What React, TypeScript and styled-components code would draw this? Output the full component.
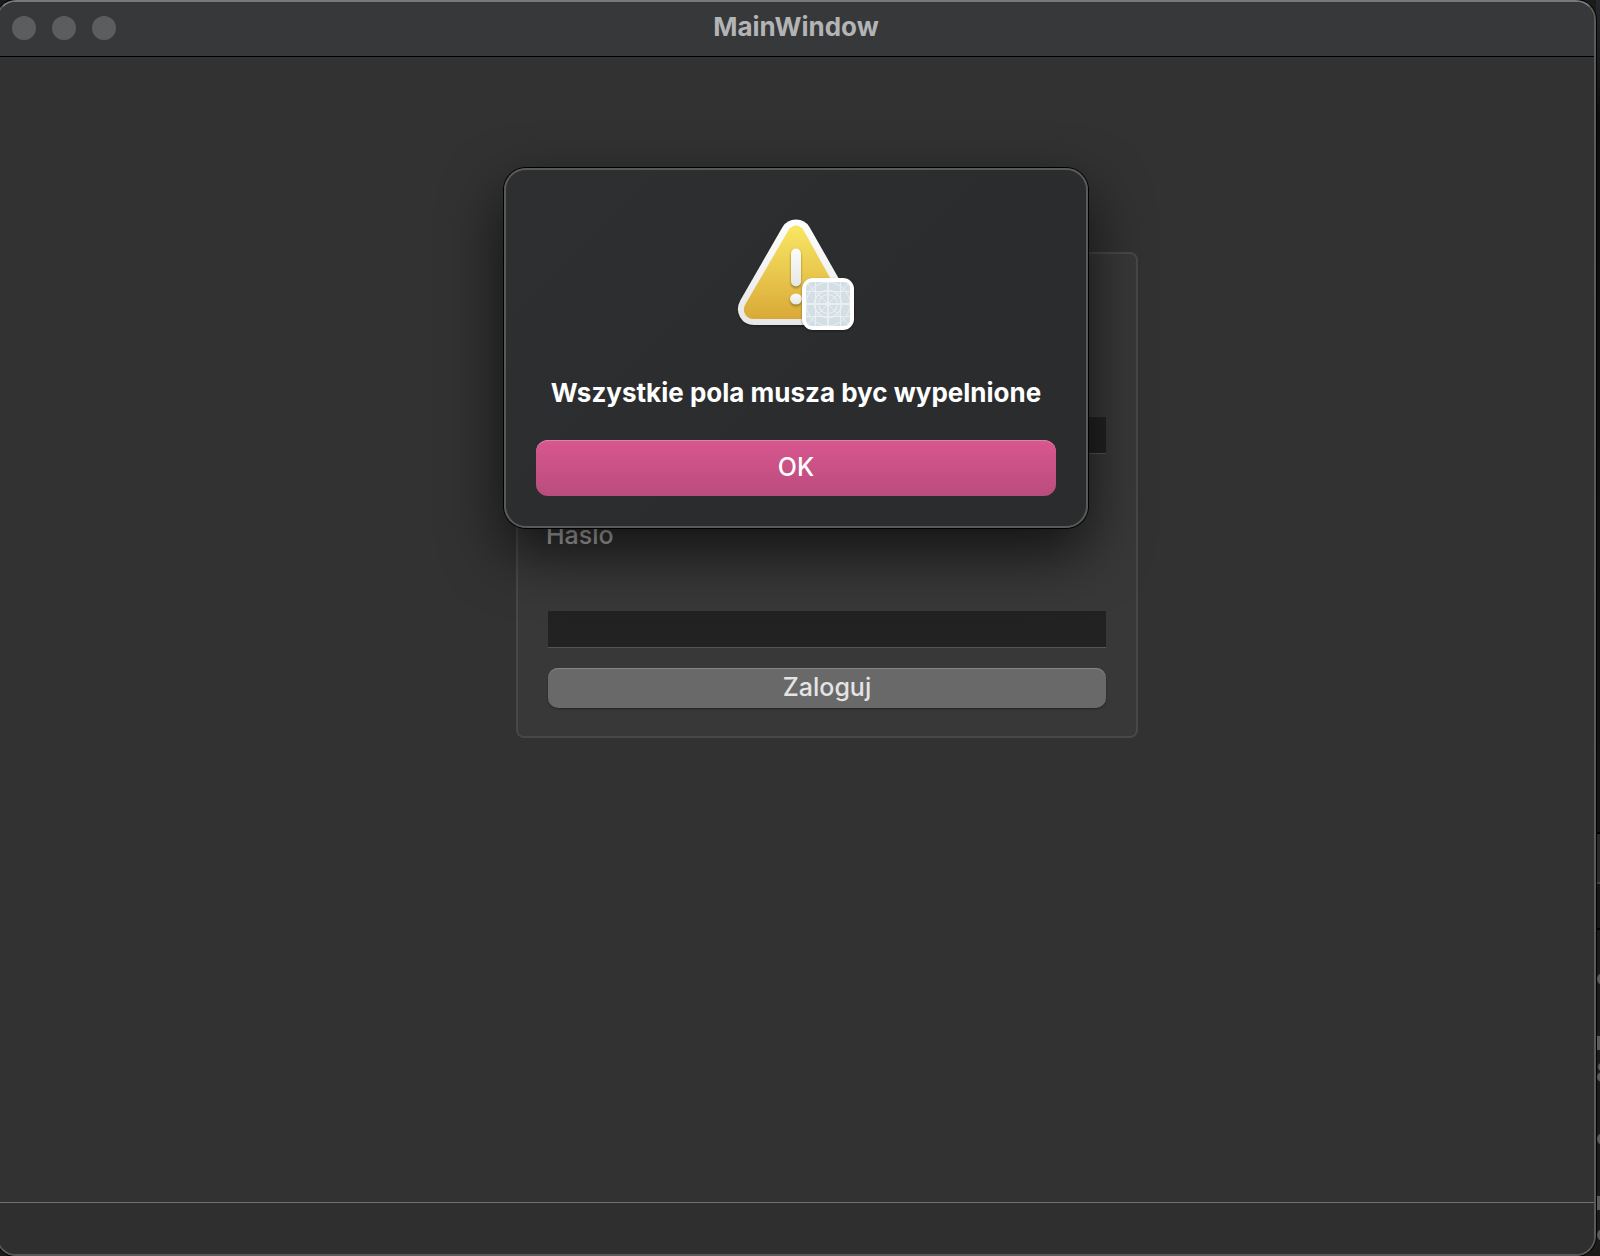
import React from "react";
import styled, { createGlobalStyle } from "styled-components";

const Global = createGlobalStyle`
  * { box-sizing: border-box; }
  html, body { margin: 0; overflow: hidden; background: #1c1b19; }
  body { font-family: Inter, "Liberation Sans", sans-serif; font-size: 25px; font-weight: 500; line-height: 32px; }
  button, input { font: inherit; }
`;

const Desktop = styled.div`
  display: flex;
  min-height: 100vh;
  overflow: hidden;
  background: #1c1b19;
`;

const Window = styled.div`
  position: relative;
  display: flex;
  flex-direction: column;
  flex: 0 0 100%;
  margin-left: -4px;
  border: 2px solid #5a5a5a;
  border-top-color: #77797b;
  border-radius: 20px;
  background: #323232;
  background-clip: padding-box;
  box-shadow: 0 0 0 1px #000;
`;

const TitleBar = styled.header`
  position: relative;
  display: flex;
  align-items: center;
  justify-content: center;
  height: 55px;
  border-bottom: 1px solid #000;
  border-radius: 18px 18px 0 0;
  background: #373839;
`;

const Title = styled.h1`
  margin: 0;
  padding-bottom: 4px;
  color: #b3b4b5;
  font-size: 26px;
  font-weight: 700;
`;

const Lights = styled.div`
  position: absolute;
  top: 14px;
  left: 14px;
  display: flex;
  gap: 16px;
`;

const Light = styled.button`
  width: 24px;
  height: 24px;
  padding: 0;
  border: 0;
  border-radius: 50%;
  background: #5c5d5e;
`;

const Main = styled.main`
  display: flex;
  flex: 1;
  align-items: flex-start;
  justify-content: center;
  padding: 195px 0 0 62px;
`;

const LoginBox = styled.form`
  display: flex;
  flex-direction: column;
  width: 622px;
  padding: 71px 30px 28px;
  border: 2px solid #484848;
  border-radius: 8px;
  background: #383838;
`;

const Label = styled.label`
  margin: 0 -2px 60px;
  color: #c4c4c4;
`;

const Field = styled.input`
  height: 37px;
  margin-bottom: 65px;
  padding: 0 8px;
  border: 0;
  border-bottom: 1px solid #555;
  border-radius: 0;
  outline: 0;
  background: #222;
  color: #e4e4e4;

  &:last-of-type { margin-bottom: 20px; }
`;

const LoginButton = styled.button`
  height: 40px;
  padding: 0 16px 2px;
  border: 0;
  border-radius: 10px;
  background: #696969;
  box-shadow: inset 0 1px #868686, 0 1px 2px rgba(0, 0, 0, 0.4);
  color: #e4e4e4;
`;

const StatusBar = styled.footer`
  height: 52px;
  border-top: 1px solid #727272;
  border-radius: 0 0 18px 18px;
  background: #2f2f2f;
`;

const Layer = styled.div`
  position: absolute;
  inset: 0;
  display: flex;
  align-items: flex-start;
  justify-content: center;
  padding-top: 166px;
`;

const Alert = styled.div`
  display: flex;
  flex-direction: column;
  align-items: center;
  width: 584px;
  padding: 38px 30px 30px;
  border: 2px solid #585959;
  border-radius: 22px;
  background: linear-gradient(135deg, #2e2f30, #2b2c2e 60%);
  background-clip: padding-box;
  box-shadow: 0 0 0 1px #000, 0 24px 60px rgba(0, 0, 0, 0.68);
`;

const AlertText = styled.p`
  margin: 41px 0 31px;
  color: #fff;
  font-size: 26px;
  font-weight: 700;
  white-space: nowrap;
`;

const OkButton = styled.button`
  width: 100%;
  height: 56px;
  padding: 0 16px 2px;
  border: 0;
  border-radius: 12px;
  background: linear-gradient(#d8578f, #ba4c7d);
  box-shadow: inset 0 1px #e07fa9;
  color: #fff;
`;

const BackWindow = styled.div`
  display: flex;
  flex-direction: column;
  flex: 0 0 4px;
`;

const BackHeader = styled.div`
  height: 834px;
  border-bottom: 2px solid #000;
  background: linear-gradient(#25282b, #1c1d1e 56px, #0c0c0c 120px, #141312);
`;

const BackTab = styled.div`
  height: 50px;
  border-bottom: 2px solid #444341;
  background: #2a2826;
`;

const BackToolbar = styled.div`
  height: 46px;
  border-bottom: 2px solid #000;
  background: #171614;
`;

const WarningIcon = () => (
  <svg width="128" height="128" viewBox="0 0 128 128" role="img" aria-label="Warning">
    <defs>
      <linearGradient id="rim" x1="0" y1="0" x2="0" y2="1">
        <stop offset="0" stopColor="#fff" />
        <stop offset="1" stopColor="#e6e6e6" />
      </linearGradient>
      <linearGradient id="gold" x1="0" y1="0" x2="0" y2="1">
        <stop offset="0" stopColor="#f9e763" />
        <stop offset="1" stopColor="#d9a938" />
      </linearGradient>
      <linearGradient id="glyph" x1="0" y1="0" x2="0" y2="1">
        <stop offset="0" stopColor="#fcfcfc" />
        <stop offset="1" stopColor="#e6e6e4" />
      </linearGradient>
      <filter id="drop" x="-20%" y="-20%" width="140%" height="150%" colorInterpolationFilters="sRGB">
        <feDropShadow dx="0" dy="1" stdDeviation="1" floodOpacity="0.4" />
      </filter>
      <filter id="mark" x="-50%" y="-20%" width="200%" height="150%" colorInterpolationFilters="sRGB">
        <feDropShadow dx="0" dy="1.5" stdDeviation="0.8" floodColor="#6d5512" floodOpacity="0.7" />
      </filter>
      <clipPath id="tile"><rect x="74" y="74" width="44" height="44" rx="6" /></clipPath>
    </defs>
    <path filter="url(#drop)" fill="url(#rim)" d="M50.500 19Q55 11.500 64 11.500T77.500 19L119 92Q124 101 119.500 109Q115 117 105 117H22Q12.500 117 8 109T8.500 92Z" />
    <path fill="url(#gold)" d="M56 23Q59 17.500 64 17.500T72 23L111.500 94Q116 101 114 106.500T105 111H22Q15.500 111 13 106T13.500 96Z" />
    <g filter="url(#mark)" fill="url(#glyph)">
      <rect x="59" y="40.500" width="10" height="38" rx="5" />
      <ellipse cx="64" cy="91" rx="6" ry="5.500" />
    </g>
    <rect filter="url(#drop)" x="70" y="70" width="52" height="52" rx="11" fill="#fff" />
    <rect x="74" y="74" width="44" height="44" rx="6" fill="#d4dfe5" />
    <g clipPath="url(#tile)" fill="none" stroke="#e9eff2" strokeWidth="1">
      <path d="M74 74L118 118M118 74L74 118M83.500 74V118M108.500 74V118M74 83.500H118M74 108.500H118" />
      <path strokeWidth="1.800" d="M96 74V118M74 96H118" />
      <circle cx="96" cy="96" r="22" />
      <circle cx="96" cy="96" r="13.500" strokeWidth="1.600" />
      <circle cx="96" cy="96" r="9.500" strokeWidth="1.200" />
    </g>
  </svg>
);

const BackContent = () => (
  <svg width="4" height="326" viewBox="0 0 4 326" fill="#5c5b59" aria-hidden="true">
    <circle cx="7" cy="49" r="6" />
    <rect x="1" y="106" width="3" height="14" />
    <circle cx="6" cy="137" r="4" />
    <circle cx="6" cy="147" r="5" />
    <circle cx="7" cy="209" r="6" />
    <rect x="1" y="266" width="3" height="14" />
    <circle cx="7" cy="305" r="6" />
  </svg>
);

export default function App() {
  return (
    <>
      <Global />
      <Desktop>
        <Window>
          <TitleBar>
            <Lights>
              <Light type="button" aria-label="Close" />
              <Light type="button" aria-label="Minimize" />
              <Light type="button" aria-label="Zoom" />
            </Lights>
            <Title>MainWindow</Title>
          </TitleBar>
          <Main>
            <LoginBox onSubmit={(e: React.FormEvent) => e.preventDefault()}>
              <Label htmlFor="login">Login</Label>
              <Field id="login" type="text" />
              <Label htmlFor="password">Haslo</Label>
              <Field id="password" type="password" />
              <LoginButton type="submit">Zaloguj</LoginButton>
            </LoginBox>
          </Main>
          <StatusBar />
          <Layer>
            <Alert role="alertdialog" aria-modal="true" aria-labelledby="alert-text">
              <WarningIcon />
              <AlertText id="alert-text">Wszystkie pola musza byc wypelnione</AlertText>
              <OkButton type="button">OK</OkButton>
            </Alert>
          </Layer>
        </Window>
        <BackWindow>
          <BackHeader />
          <BackTab />
          <BackToolbar />
          <BackContent />
        </BackWindow>
      </Desktop>
    </>
  );
}
